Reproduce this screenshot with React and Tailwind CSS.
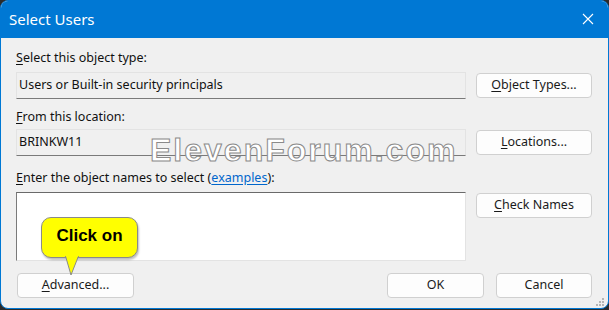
import React from 'react'

const font = { fontFamily: '"Noto Sans", "Liberation Sans", Arial, sans-serif' }

const Key = ({ children }) => <span className="underline underline-offset-2">{children}</span>

const Btn = ({ children, w = 'w-[116px]', className = '' }) => (
  <button
    className={`h-[25px] ${w} rounded-[4px] border border-[#d0d0d0] bg-[#fdfdfd] text-[12.5px] text-[#1a1a1a] leading-none ${className}`}
  >
    {children}
  </button>
)

const Field = ({ children }) => (
  <div className="flex h-[27px] w-[450px] items-center border border-[#e3e3e3] border-b-[#7a7a7a] bg-[#f0f0f0] px-[2px] text-[12.5px] text-[#111]">
    {children}
  </div>
)

const App = () => {
  return (
    <div className="h-[310px] w-[609px] bg-[#2b2b2b]" style={font}>
      <div className="relative flex h-[309px] w-[609px] flex-col overflow-hidden rounded-[8px] border border-[#0078d4] bg-[#f0f0f0]">
        {/* title bar */}
        <div className="flex h-[37px] shrink-0 items-center justify-between bg-[#0078d4] pl-[8px] pr-[14px] text-white">
          <span className="text-[15px]">Select Users</span>
          <svg width="12" height="12" viewBox="0 0 12 12" className="mb-[1px]">
            <path d="M1 1 L11 11 M11 1 L1 11" stroke="white" strokeWidth="1.1" />
          </svg>
        </div>

        <div className="flex flex-col px-[15px] pt-[12px] text-[12.5px] text-[#111]">
          <div className="leading-[16px]"><Key>S</Key>elect this object type:</div>
          <div className="mt-[6px] flex items-center gap-[10px]">
            <Field>Users or Built-in security principals</Field>
            <Btn><Key>O</Key>bject Types...</Btn>
          </div>

          <div className="mt-[10px] leading-[16px]"><Key>F</Key>rom this location:</div>
          <div className="mt-[4px] flex items-center gap-[10px]">
            <Field>BRINKW11</Field>
            <Btn><Key>L</Key>ocations...</Btn>
          </div>

          <div className="mt-[14px] leading-[16px]">
            <Key>E</Key>nter the object names to select (
            <span className="text-[#0066cc] underline underline-offset-2">examples</span>):
          </div>
          <div className="mt-[6px] flex items-start gap-[10px]">
            <div className="h-[69px] w-[450px] border border-[#e3e3e3] border-l-[#7a7a7a] border-t-[#6a6a6a] bg-white" />
            <Btn className="mt-[1px]"><Key>C</Key>heck Names</Btn>
          </div>

          <div className="mt-[12px] flex items-center pl-[1px]">
            <Btn w="w-[117px]"><Key>A</Key>dvanced...</Btn>
            <div className="ml-auto mr-[1px] flex gap-[12px]">
              <Btn w="w-[97px]">OK</Btn>
              <Btn w="w-[96px]">Cancel</Btn>
            </div>
          </div>
        </div>

        {/* resize grip */}
        <svg width="10" height="10" viewBox="0 0 10 10" className="absolute bottom-[1px] right-[3px]">
          <rect x="7" y="1" width="2" height="2" fill="#b5b5b5" />
          <rect x="4" y="4" width="2" height="2" fill="#b5b5b5" />
          <rect x="7" y="4" width="2" height="2" fill="#b5b5b5" />
          <rect x="1" y="7" width="2" height="2" fill="#b5b5b5" />
          <rect x="4" y="7" width="2" height="2" fill="#b5b5b5" />
          <rect x="7" y="7" width="2" height="2" fill="#b5b5b5" />
        </svg>

        {/* watermark */}
        <div
          className="pointer-events-none absolute left-[149px] top-[133px] text-[32px] leading-none tracking-[2px] text-white [-webkit-text-stroke:1px_#8a8a8a]"
          style={{ fontFamily: '"Liberation Sans", Arial, sans-serif', fontWeight: 700 }}
        >
          ElevenForum.com
        </div>

        {/* callout */}
        <div className="absolute left-[40px] top-[216px]">
          <div className="flex h-[41px] w-[97px] items-center justify-center rounded-[10px] border border-[#8a8a8a] bg-[#ffff00] pb-[3px] text-[17px] font-bold text-black shadow-[1px_2px_2px_rgba(0,0,0,0.25)]" style={{ fontFamily: '"Liberation Sans", Arial, sans-serif' }}>
            Click on
          </div>
          <svg width="14" height="22" viewBox="0 0 14 22" className="absolute left-[24px] top-[39px]">
            <path d="M0.5 0 L6 19 L13.5 0 Z" fill="#ffff00" stroke="#8a8a8a" strokeWidth="1" />
            <path d="M1 0 L13 0" stroke="#ffff00" strokeWidth="2" />
          </svg>
        </div>
      </div>
    </div>
  )
}

export default App
